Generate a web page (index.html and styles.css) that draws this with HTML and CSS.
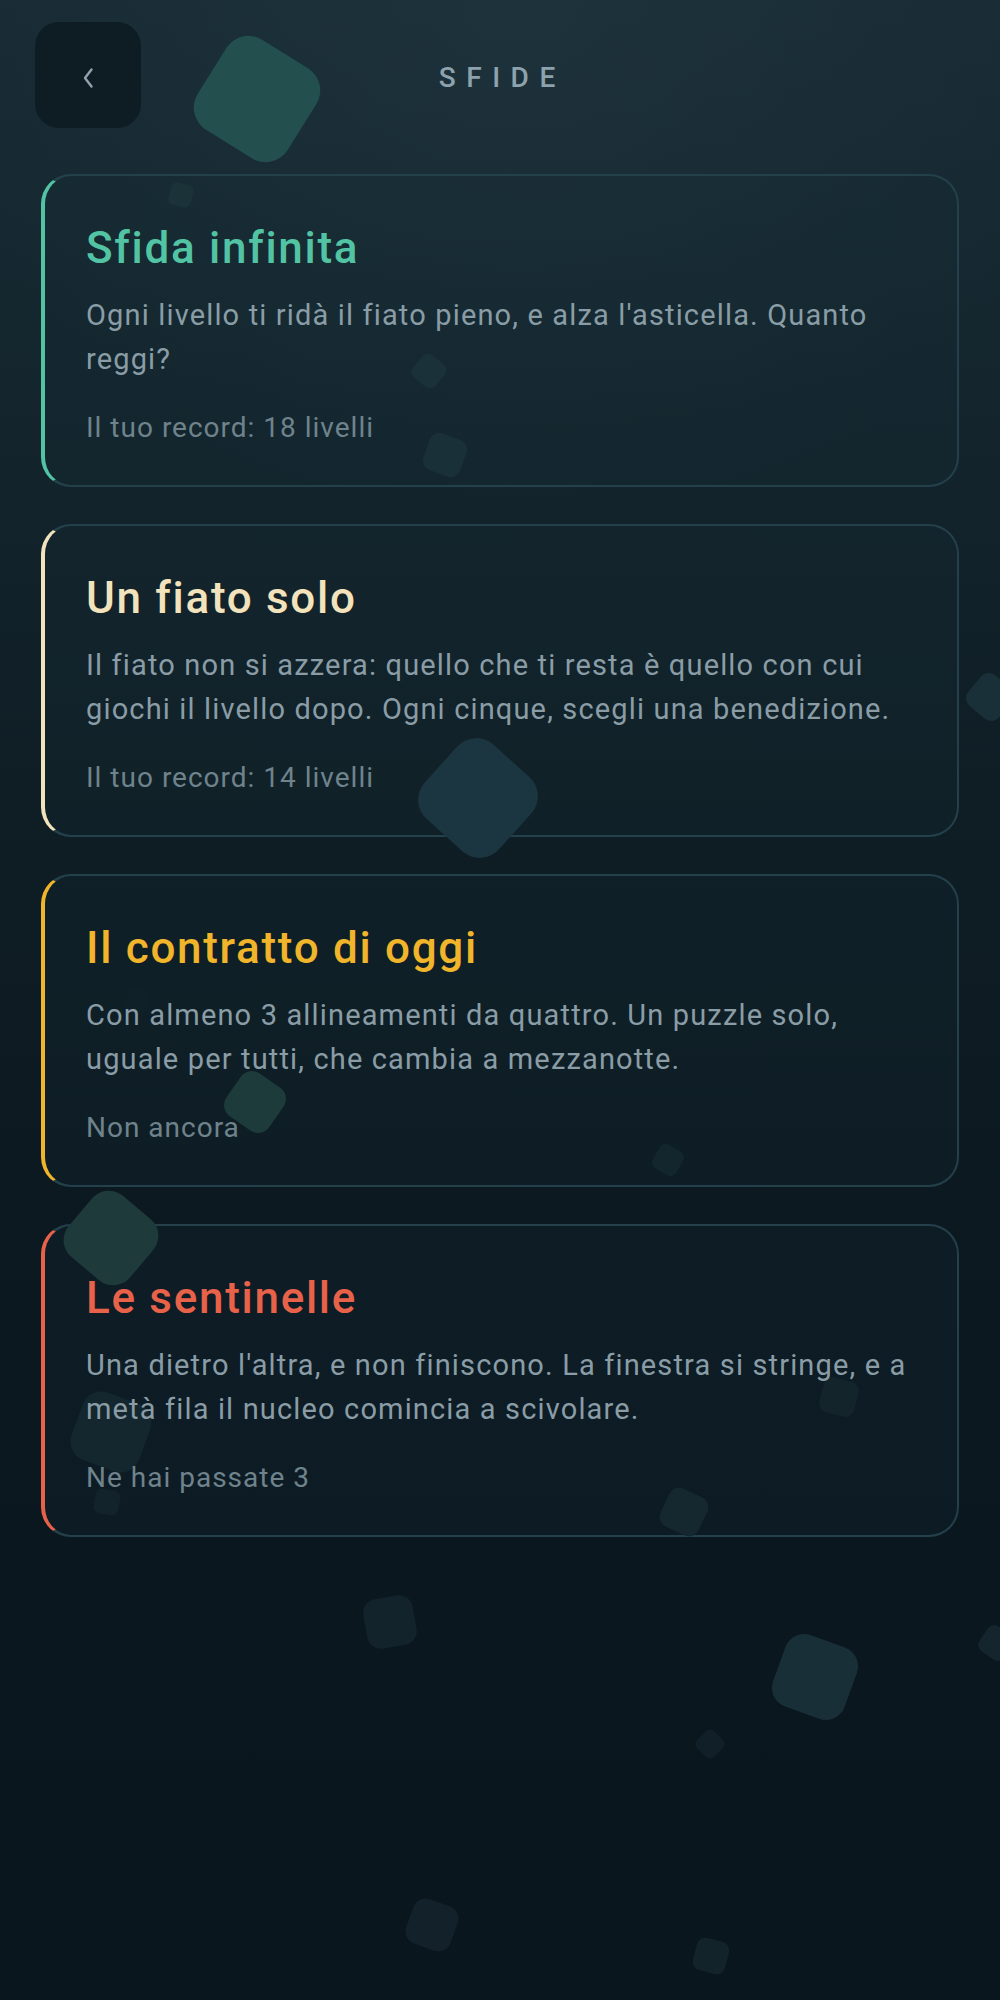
FILE: index.html
```html
<!DOCTYPE html>
<html lang="it">
<head>
<meta charset="utf-8">
<title>Sfide</title>
<link rel="stylesheet" href="styles.css">
</head>
<body>
<div class="page">
  <div class="deco" aria-hidden="true">
    <span class="blob b1"></span><span class="blob b2"></span><span class="blob b3"></span>
    <span class="blob b4"></span><span class="blob b5"></span><span class="blob b6"></span>
    <span class="blob b7"></span><span class="blob b8"></span><span class="blob b9"></span>
    <span class="blob b10"></span><span class="blob b11"></span><span class="blob b12"></span>
    <span class="blob b13"></span><span class="blob b14"></span><span class="blob b15"></span>
    <span class="blob b16"></span><span class="blob b17"></span><span class="blob b18"></span>
    <span class="blob b19"></span><span class="blob b20"></span>
  </div>

  <header class="topbar">
    <button class="back" type="button" aria-label="Indietro">
      <svg width="14" height="24" viewBox="0 0 14 24"><path d="M10.5 3.5 L4 12 L10.5 20.5" fill="none" stroke="#8fa4ae" stroke-width="2.4" stroke-linecap="round" stroke-linejoin="round"/></svg>
    </button>
    <h1 class="title">SFIDE</h1>
    <span class="spacer"></span>
  </header>

  <main class="list">
    <section class="card card-teal">
      <div class="card-body">
        <h2 class="card-title">Sfida infinita</h2>
        <p class="card-desc">Ogni livello ti ridà il fiato pieno, e alza l'asticella. Quanto reggi?</p>
        <p class="card-meta">Il tuo record: 18 livelli</p>
      </div>
    </section>
    <section class="card card-cream">
      <div class="card-body">
        <h2 class="card-title">Un fiato solo</h2>
        <p class="card-desc">Il fiato non si azzera: quello che ti resta è quello con cui giochi il livello dopo. Ogni cinque, scegli una benedizione.</p>
        <p class="card-meta">Il tuo record: 14 livelli</p>
      </div>
    </section>
    <section class="card card-amber">
      <div class="card-body">
        <h2 class="card-title">Il contratto di oggi</h2>
        <p class="card-desc">Con almeno 3 allineamenti da quattro. Un puzzle solo, uguale per tutti, che cambia a mezzanotte.</p>
        <p class="card-meta">Non ancora</p>
      </div>
    </section>
    <section class="card card-coral">
      <div class="card-body">
        <h2 class="card-title">Le sentinelle</h2>
        <p class="card-desc">Una dietro l'altra, e non finiscono. La finestra si stringe, e a metà fila il nucleo comincia a scivolare.</p>
        <p class="card-meta">Ne hai passate 3</p>
      </div>
    </section>
  </main>
</div>
</body>
</html>
```

FILE: styles.css
```css
* { box-sizing: border-box; }

html, body {
  margin: 0;
  padding: 0;
}

body {
  font-family: Roboto, "Noto Sans", "Liberation Sans", sans-serif;
  background: #0a161d;
  color: #8b9ea7;
  font-variant-ligatures: none;
}

.page {
  position: relative;
  min-height: 2000px;
  padding: 22px 41px 0 41px;
  overflow: hidden;
  background:
    radial-gradient(ellipse 620px 520px at 52% 0%, rgba(34, 56, 66, 0.55) 0%, rgba(34, 56, 66, 0.25) 55%, rgba(34, 56, 66, 0) 100%),
    linear-gradient(180deg, #182b34 0%, #13242c 22%, #0e1c23 45%, #0b1820 65%, #0a161d 100%);
}

/* decorative blobs */
.deco {
  position: absolute;
  inset: 0;
  z-index: 1;
  pointer-events: none;
}

.blob {
  position: absolute;
  display: block;
  transform: translate(-50%, -50%) rotate(var(--r, 30deg));
  border-radius: 26%;
}

.b1  { left: 257px; top: 99px;   width: 106px; height: 106px; --r: 32deg; background: #234f4f; border-radius: 26px; }
.b2  { left: 181px; top: 195px;  width: 23px;  height: 23px;  --r: 15deg; background: #1b3238; }
.b3  { left: 429px; top: 371px;  width: 29px;  height: 29px;  --r: 40deg; background: #1b3139; }
.b4  { left: 445px; top: 455px;  width: 39px;  height: 39px;  --r: 20deg; background: #1a3038; }
.b5  { left: 478px; top: 798px;  width: 100px; height: 100px; --r: 42deg; background: #1b3541; border-radius: 26px; }
.b6  { left: 990px; top: 697px;  width: 40px;  height: 40px;  --r: 40deg; background: #1a3038; }
.b7  { left: 255px; top: 1102px; width: 52px;  height: 52px;  --r: 35deg; background: #1e3b3c; }
.b8  { left: 668px; top: 1160px; width: 27px;  height: 27px;  --r: 30deg; background: #13262d; }
.b9  { left: 111px; top: 1238px; width: 80px;  height: 80px;  --r: 40deg; background: #1e3a3b; border-radius: 22px; }
.b10 { left: 111px; top: 1432px; width: 72px;  height: 72px;  --r: 20deg; background: #14272f; border-radius: 20px; }
.b11 { left: 107px; top: 1502px; width: 25px;  height: 25px;  --r: 10deg; background: #13232b; }
.b12 { left: 684px; top: 1512px; width: 42px;  height: 42px;  --r: 25deg; background: #15272f; }
.b13 { left: 839px; top: 1397px; width: 36px;  height: 36px;  --r: 15deg; background: #13242b; }
.b14 { left: 390px; top: 1622px; width: 50px;  height: 50px;  --r: -10deg; background: #13232c; border-radius: 14px; }
.b15 { left: 815px; top: 1677px; width: 76px;  height: 76px;  --r: 20deg; background: #182f38; border-radius: 20px; }
.b16 { left: 710px; top: 1744px; width: 24px;  height: 24px;  --r: 45deg; background: #112028; }
.b17 { left: 996px; top: 1643px; width: 30px;  height: 30px;  --r: 35deg; background: #14252d; }
.b18 { left: 432px; top: 1925px; width: 47px;  height: 47px;  --r: 20deg; background: #12212a; border-radius: 13px; }
.b19 { left: 711px; top: 1956px; width: 33px;  height: 33px;  --r: 15deg; background: #12232a; }
.b20 { left: 138px; top: 1000px; width: 24px;  height: 24px;  --r: 20deg; background: #102028; }

/* header */
.topbar {
  position: relative;
  z-index: 2;
  display: flex;
  align-items: center;
  justify-content: space-between;
  height: 106px;
  margin-left: -6px;
}

.back {
  width: 106px;
  height: 106px;
  border: none;
  border-radius: 24px;
  background: #0e1d24;
  display: flex;
  align-items: center;
  justify-content: center;
  padding: 5px 0 0 0;
  cursor: pointer;
}

.title {
  margin: 5px 0 0 0;
  font-size: 28px;
  font-weight: 500;
  letter-spacing: 10.5px;
  color: #8da2ac;
  padding-left: 10.5px;
  line-height: 1;
}

.spacer {
  width: 106px;
  height: 106px;
}

/* cards */
.list {
  display: flex;
  flex-direction: column;
  gap: 37px;
  margin-top: 46px;
}

.card {
  position: relative;
  height: 313px;
  border: 2px solid #23404b;
  border-left: 4px solid var(--accent);
  border-radius: 30px;
  background: rgba(24, 44, 54, 0.22);
  padding: 46px 38px 0 41px;
}

.card-body {
  position: relative;
  z-index: 2;
}

.card-teal  { --accent: #52c4a4; }
.card-cream { --accent: #f2e3bc; }
.card-amber { --accent: #f0b52a; }
.card-coral { --accent: #e8624a; }

.card-title {
  margin: 0 0 20px 0;
  font-size: 44px;
  line-height: 52px;
  font-weight: 500;
  letter-spacing: 1.7px;
  color: var(--accent);
}

.card-desc {
  margin: 0;
  font-size: 29px;
  line-height: 43.5px;
  letter-spacing: 1.15px;
  color: #8a9da6;
}

.card-meta {
  margin: 27px 0 0 0;
  font-size: 28px;
  line-height: 40px;
  letter-spacing: 1px;
  color: #6f838c;
}
```
